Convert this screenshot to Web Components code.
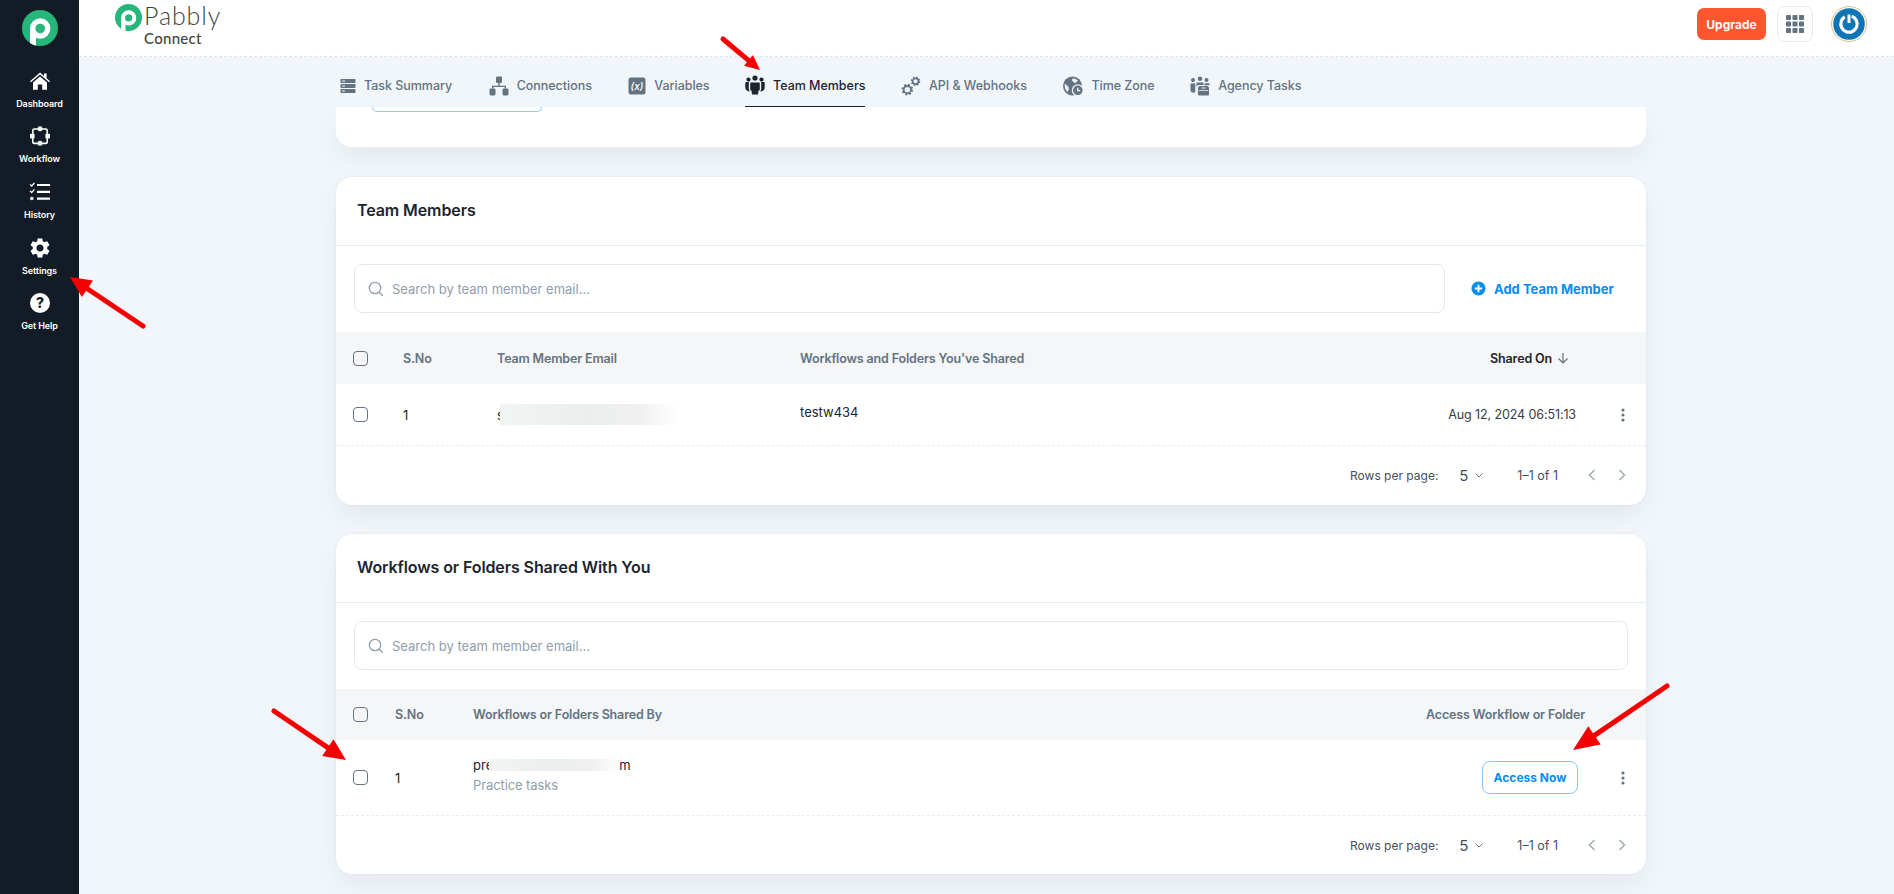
<!DOCTYPE html>
<html lang="en">
<head>
<meta charset="UTF-8">
<title>Pabbly Connect - Team Members</title>
<style>
  html, body { margin: 0; height: 894px; overflow: hidden; }
  body { position: relative; display: flex; background: #f1f6fb; font-family: Inter, "Liberation Sans", sans-serif; color: #1c252e; }
</style>
</head>
<body>

<side-bar>
  <nav-item label="Dashboard"><svg viewBox="0 0 22 20" width="22" height="20" fill="#fff"><path d="M1 10.200 11 1.600l4 3.400V2.600h2.600v4.600L21 10.200l-.9 1L11 3.500l-9.100 7.700z"/><path d="M4 11.400 11 5.400l7 6v7.400h-4.800V13.400H8.800v5.400H4z"/></svg></nav-item>
  <nav-item label="Workflow"><svg viewBox="0 0 20 20" width="20" height="20"><rect x="2.800" y="3" width="14.400" height="14.400" rx="1.500" fill="none" stroke="#fff" stroke-width="1.600"/><circle cx="10" cy="2.700" r="2.500" fill="#fff"/><circle cx="10" cy="17.300" r="2.500" fill="#fff"/><rect x="0" y="7.800" width="4.600" height="4.800" rx="1" fill="#fff"/><rect x="15.400" y="7.800" width="4.600" height="4.800" rx="1" fill="#fff"/></svg></nav-item>
  <nav-item label="History"><svg viewBox="0 0 22 20" width="22" height="20" fill="none" stroke="#fff"><path d="M1 2.400 2.700 4 5.400.8M1 8.900l1.700 1.600 2.700-3.200" stroke-width="1.300"/><circle cx="2.800" cy="16.500" r="1.800" fill="#fff" stroke="none"/><path d="M8 3h13M8 9.800h13M8 16.600h13" stroke-width="2.200"/></svg></nav-item>
  <nav-item label="Settings"><svg viewBox="0 0 24 24" width="24" height="24" fill="#fff"><path d="M19.140 12.940c.04-.3.06-.61.06-.94 0-.32-.02-.64-.07-.94l2.030-1.580a.49.49 0 0 0 .12-.61l-1.920-3.320a.488.488 0 0 0-.59-.22l-2.390.96c-.5-.38-1.030-.7-1.620-.94l-.36-2.540a.484.484 0 0 0-.48-.41h-3.840c-.24 0-.43.17-.47.41l-.36 2.540c-.59.24-1.130.57-1.620.94l-2.390-.96c-.22-.08-.47 0-.59.22L2.740 8.870c-.12.21-.08.47.12.61l2.030 1.580c-.05.3-.09.63-.09.94s.02.64.07.94l-2.030 1.580a.49.49 0 0 0-.12.61l1.920 3.320c.12.22.37.29.59.22l2.390-.96c.5.38 1.030.7 1.620.94l.36 2.540c.05.24.24.41.48.41h3.840c.24 0 .44-.17.47-.41l.36-2.540c.59-.24 1.130-.56 1.620-.94l2.390.96c.22.08.47 0 .59-.22l1.920-3.320c.12-.22.07-.47-.12-.61l-2.010-1.580zM12 15.600c-1.980 0-3.600-1.620-3.600-3.600s1.620-3.600 3.600-3.600 3.600 1.620 3.600 3.600-1.620 3.600-3.600 3.600z"/></svg></nav-item>
  <nav-item label="Get Help"><svg viewBox="0 0 20 20" width="20" height="20"><circle cx="10" cy="10" r="10" fill="#fff"/><text x="10" y="15" text-anchor="middle" font-family="Inter, sans-serif" font-size="14" font-weight="800" fill="#131c26">?</text></svg></nav-item>
</side-bar>

<main-column>
  <top-bar></top-bar>
  <page-body>
    <tab-strip>
      <tab-item label="Task Summary"><svg viewBox="0 0 16 16" width="16" height="16" fill="#637381"><rect x="0.500" y="1" width="15" height="4" rx=".8"/><rect x="0.500" y="6" width="15" height="4" rx=".8"/><rect x="0.500" y="11" width="15" height="4" rx=".8"/><path d="M2 2.500h3v1H2zM2 7.500h3v1H2zM2 12.500h3v1H2z" fill="#f1f6fb"/></svg></tab-item>
      <tab-item label="Connections"><svg viewBox="0 0 20 20" width="20" height="20" fill="#637381"><rect x="7" y="0.500" width="6" height="6.500" rx="1.200"/><rect x="0.500" y="12.500" width="6" height="7" rx="1.400"/><rect x="13.500" y="12.500" width="6" height="7" rx="1.400"/><path d="M9.300 7h1.400v2.800h6.300v2.700h-1.400v-1.400H4.400v1.400H3V9.800h6.300z"/></svg></tab-item>
      <tab-item label="Variables"><svg viewBox="0 0 18 18" width="18" height="18"><rect x="0.500" y="0.500" width="17" height="17" rx="2.500" fill="#637381"/><text x="9" y="12.600" text-anchor="middle" font-family="Inter, sans-serif" font-size="10" font-style="italic" fill="#fff">(x)</text></svg></tab-item>
      <tab-item label="Team Members" active style="margin-left:-1px"><svg viewBox="0 0 20 20" width="20" height="20" fill="#1c252e"><circle cx="10" cy="3" r="2.600"/><circle cx="3.500" cy="4.600" r="2.100"/><circle cx="16.500" cy="4.600" r="2.100"/><path d="M6.200 7.500h7.600c.6 0 1 .4 1 1v5.500c0 1-.5 1.500-1.300 1.800L13 19.500H7l-.5-3.700C5.700 15.500 5.200 15 5.200 14V8.500c0-.6.4-1 1-1z"/><path d="M.3 8c0-.6.4-1 1-1h2.500v7c0 .8.3 1.500.9 2L4.500 16.500C1.700 16 .3 14.500.3 12.500zM19.700 8c0-.6-.4-1-1-1h-2.500v7c0 .8-.3 1.500-.9 2l.2.5c2.800-.5 4.200-2 4.200-4z"/></svg></tab-item>
      <tab-item label="API &amp; Webhooks" style="margin-left:-1px"><svg viewBox="0 0 22 22" width="20" height="20" fill="none" stroke="#637381"><circle cx="7" cy="15" r="4" stroke-width="2"/><circle cx="7" cy="15" r="5.400" stroke-width="2" stroke-dasharray="2.100 2.140"/><circle cx="16" cy="5.800" r="3.200" stroke-width="1.800"/><circle cx="16" cy="5.800" r="4.300" stroke-width="1.800" stroke-dasharray="1.700 1.680"/></svg></tab-item>
      <tab-item label="Time Zone"><svg viewBox="0 0 20 20" width="20" height="20"><circle cx="9.500" cy="10" r="9.500" fill="#637381"/><path d="M10 2.200c2 .2 3.500 1 5 2.400l-2.500 2.300-1.800-.4L8.800 4.300zM1.700 7.500l3.600 3 .7 2.700-1.800 2.800C2.500 14.500 1.200 11 1.700 7.500z" fill="#f1f6fb" opacity=".95"/><circle cx="14.800" cy="14.300" r="5.400" fill="#637381" stroke="#f1f6fb" stroke-width="1.200"/><path d="M14.800 11.800v2.800h2.300" fill="none" stroke="#f1f6fb" stroke-width="1.300"/></svg></tab-item>
      <tab-item label="Agency Tasks" style="margin-left:-1px"><svg viewBox="0 0 20 20" width="20" height="20" fill="#637381"><circle cx="10" cy="2.700" r="2.300"/><circle cx="3" cy="4" r="2"/><circle cx="16.500" cy="4" r="2"/><path d="M0.500 7.500h4.800v9H2.500C1.200 16.500.5 15.500.5 14zM6.500 6.500h7v2.500H9C7.500 9 6.500 10 6.500 11.500zM14.500 7.200h5v2h-5z"/><path d="M8 11.500 9.500 10h8l1.500 1.500v6.800a1.200 1.200 0 0 1-1.200 1.200H9.200A1.200 1.200 0 0 1 8 18.300z"/><path d="M8.800 14.200h9.400v.9H8.800zM11.500 11.500h4v1h-4z" fill="#f1f6fb"/></svg></tab-item>
    </tab-strip>
    <stub-card></stub-card>

    <data-card title="Team Members" style="margin-top:30px;height:328px">
      <search-box slot="search" style="width:1091px"></search-box>
      <add-link slot="search">Add Team Member</add-link>
      <table-row slot="table" head columns="50px 94px 303px 1fr auto 70px" height="52">
        <check-mark></check-mark><span>S.No</span><span>Team Member Email</span><span>Workflows and Folders You've Shared</span>
        <sort-label>Shared On</sort-label><span></span>
      </table-row>
      <table-row slot="table" columns="50px 94px 303px 1fr auto 70px" height="61">
        <check-mark></check-mark><span>1</span>
        <span style="display:flex;align-items:center">s<redact-blur w="177" h="21" style="margin-left:-4px"></redact-blur></span>
        <span style="padding-bottom:6px">testw434</span>
        <span style="font-size:12.500px;letter-spacing:-.1px;color:#333d48">Aug 12, 2024 06:51:13</span>
        <kebab-menu offset="47"></kebab-menu>
      </table-row>
      <page-nav slot="table"></page-nav>
    </data-card>

    <data-card title="Workflows or Folders Shared With You" style="margin-top:29px;height:340px">
      <search-box slot="search" style="width:1274px"></search-box>
      <table-row slot="table" head columns="42px 78px 1fr auto 61px" height="51">
        <check-mark></check-mark><span>S.No</span><span>Workflows or Folders Shared By</span><span>Access Workflow or Folder</span><span></span>
      </table-row>
      <table-row slot="table" columns="42px 78px 1fr auto 61px" height="75">
        <check-mark></check-mark><span>1</span>
        <span style="padding-bottom:5px">
          <span style="display:flex;align-items:center;height:20px">pre<redact-blur w="130" h="12" style="margin-left:-4px"></redact-blur>m</span>
          <span style="display:block;color:#919eab;line-height:20px;letter-spacing:-.1px">Practice tasks</span>
        </span>
        <access-button>Access Now</access-button>
        <kebab-menu offset="38"></kebab-menu>
      </table-row>
      <page-nav slot="table"></page-nav>
    </data-card>
  </page-body>
</main-column>

<red-arrow x1="143" y1="326" x2="70" y2="277" head="21" half="10" width="5"></red-arrow>
<red-arrow x1="723" y1="39" x2="760" y2="70" head="15" half="7" width="5"></red-arrow>
<red-arrow x1="274" y1="711" x2="346" y2="760" head="22" half="10" width="5"></red-arrow>
<red-arrow x1="1667" y1="686" x2="1573" y2="750" head="26" half="11" width="5"></red-arrow>

<script>
  // small helper, every element gets an open shadow root from a html string
  function define(name, html, extra) {
    customElements.define(name, class extends HTMLElement {
      constructor() {
        super();
        this.attachShadow({ mode: "open" }).innerHTML = html;
      }
      connectedCallback() {
        if (extra) extra(this, this.shadowRoot);
      }
    });
  }

  define("side-bar", `
    <style>
      :host { display: flex; flex-direction: column; align-items: center; width: 79px; flex: none; height: 894px; background: #131c26; }
      svg { display: block; margin: 10px 0 9px; }
      .items { display: flex; flex-direction: column; }
    </style>
    <svg width="36" height="36" viewBox="0 0 36 36">
      <defs><clipPath id="c"><circle cx="18" cy="18" r="18"/></clipPath></defs>
      <circle cx="18" cy="18" r="18" fill="#26b67a"/>
      <g clip-path="url(#c)">
        <path d="M8 18.500a10.200 10.200 0 1 1 10.200 10.200c-1.500 0-3-.3-4.200-.9V37H8z" fill="#fff"/>
        <circle cx="18.200" cy="18.500" r="4.800" fill="#26b67a"/>
      </g>
    </svg>
    <div class="items"><slot></slot></div>`);

  define("nav-item", `
    <style>
      :host { display: flex; flex-direction: column; align-items: center; justify-content: flex-end; height: 55.700px; width: 79px; color: #fff; font-size: 9px; font-weight: 600; letter-spacing: -.1px; }
      .ic { height: 24px; display: flex; align-items: center; justify-content: center; margin-bottom: 4px; }
      .lb { line-height: 14px; height: 14px; }
    </style>
    <div class="ic"><slot></slot></div><div class="lb"></div>`,
    (el, root) => { root.querySelector(".lb").textContent = el.getAttribute("label"); });

  define("main-column", `
    <style>:host { display: flex; flex-direction: column; flex: 1; min-width: 0; }</style><slot></slot>`);

  define("top-bar", `
    <style>
      :host { display: flex; align-items: flex-start; height: 56px; flex: none; background: #fff; border-bottom: 1px dashed #dfe3e8; padding: 0 27px 0 36px; }
      .logo { display: flex; align-items: flex-start; height: 56px; }
      .brand { display: flex; flex-direction: column; margin-left: 2px; font-family: Lato, sans-serif; color: #444; }
      .brand b { font-weight: 300; font-size: 25px; line-height: 26px; height: 26px; letter-spacing: .9px; margin-top: 2px; }
      .brand i { font-style: normal; font-weight: 500; font-size: 15px; line-height: 16px; letter-spacing: .3px; margin-top: 2px; }
      .logo svg { margin-top: 4px; }
      .right { margin-left: auto; display: flex; align-items: center; height: 48px; }
      .up { width: 69px; height: 32px; border-radius: 7px; background: #ff5630; color: #fff; font-size: 12px; font-weight: 700; display: flex; align-items: center; justify-content: center; }
      .grid { width: 34px; height: 34px; margin-left: 11px; border: 1px solid #e8ebee; border-radius: 8px; display: flex; align-items: center; justify-content: center; }
      .av { margin-left: 18px; display: block; }
    </style>
    <div class="logo">
      <svg width="27" height="27" viewBox="0 0 36 36">
        <defs><clipPath id="c2"><circle cx="18" cy="18" r="18"/></clipPath></defs>
        <circle cx="18" cy="18" r="18" fill="#26b67a"/>
        <g clip-path="url(#c2)">
          <path d="M8 18.500a10.200 10.200 0 1 1 10.200 10.200c-1.500 0-3-.3-4.200-.9V37H8z" fill="#fff"/>
          <circle cx="18.200" cy="18.500" r="4.800" fill="#26b67a"/>
        </g>
      </svg>
      <div class="brand"><b>Pabbly</b><i>Connect</i></div>
    </div>
    <div class="right">
      <div class="up">Upgrade</div>
      <div class="grid">
        <svg width="18" height="18" viewBox="0 0 18 18" fill="#637381">
          <rect x="0" y="0" width="5" height="5" rx=".8"/><rect x="6.500" y="0" width="5" height="5" rx=".8"/><rect x="13" y="0" width="5" height="5" rx=".8"/>
          <rect x="0" y="6.500" width="5" height="5" rx=".8"/><rect x="6.500" y="6.500" width="5" height="5" rx=".8"/><rect x="13" y="6.500" width="5" height="5" rx=".8"/>
          <rect x="0" y="13" width="5" height="5" rx=".8"/><rect x="6.500" y="13" width="5" height="5" rx=".8"/><rect x="13" y="13" width="5" height="5" rx=".8"/>
        </svg>
      </div>
      <svg class="av" width="36" height="36" viewBox="0 0 36 36">
        <circle cx="18" cy="18" r="17.500" fill="#fff" stroke="#c9b26a" stroke-width=".8"/>
        <circle cx="18" cy="18" r="15.800" fill="#0f75b5"/>
        <circle cx="18" cy="18" r="8.200" fill="none" stroke="#fff" stroke-width="3.200" stroke-dasharray="44 8" transform="rotate(-70 18 18)"/>
        <path d="M18 8.500v8.500" stroke="#fff" stroke-width="3"/>
      </svg>
    </div>`);

  define("page-body", `
    <style>:host { display: flex; flex-direction: column; padding-left: 257px; width: 1310px; }</style><slot></slot>`);

  define("tab-strip", `
    <style>:host { display: flex; height: 50px; flex: none; padding-left: 4px; background: #f1f6fb; gap: 36.500px; }</style><slot></slot>`);

  define("tab-item", `
    <style>
      :host { display: flex; align-items: center; gap: 8px; height: 50px; padding-top: 7px; box-sizing: border-box; color: #637381; font-size: 12.500px; font-weight: 500; letter-spacing: -.03px; white-space: nowrap; }
      :host([active]) { color: #1c252e; border-bottom: 1px solid #1c252e; }
    </style>
    <slot></slot><span class="t"></span>`,
    (el, root) => { root.querySelector(".t").textContent = el.getAttribute("label"); });

  define("stub-card", `
    <style>
      :host { display: block; height: 40px; flex: none; background: #fff; border-radius: 0 0 16px 16px; box-shadow: 0 12px 24px -4px rgba(145,158,171,.16); }
      div { margin-left: 36px; width: 170px; height: 5px; box-sizing: border-box; border: 1px solid #8fc9f5; border-top: 0; border-radius: 0 0 7px 7px; }
    </style><div></div>`);

  define("data-card", `
    <style>
      :host { display: block; flex: none; box-sizing: border-box; background: #fff; border-radius: 16px; overflow: hidden; box-shadow: 0 12px 24px -4px rgba(145,158,171,.16), 0 0 2px rgba(145,158,171,.2); }
      .head { height: 69px; display: flex; align-items: center; padding: 0 0 2px 21px; box-sizing: border-box; font-size: 16px; font-weight: 600; letter-spacing: -.1px; color: #1c252e; border-bottom: 1px solid #e9ecef; }
      .search { display: flex; align-items: center; padding: 18px 18px 19px; height: 49px; }
    </style>
    <div class="head"></div>
    <div class="search"><slot name="search"></slot></div>
    <slot name="table"></slot>`,
    (el, root) => { root.querySelector(".head").textContent = el.getAttribute("title"); el.removeAttribute("title"); });

  define("search-box", `
    <style>
      :host { display: flex; align-items: center; height: 49px; flex: none; box-sizing: border-box; border: 1px solid #e4e8ec; border-radius: 8px; padding-left: 13px; gap: 8px; color: #919eab; font-size: 13px; }
      svg { display: block; }
    </style>
    <svg width="16" height="16" viewBox="0 0 16 16" fill="none" stroke="#919eab" stroke-width="1.300"><circle cx="7" cy="7" r="5.700"/><path d="m11.200 11.200 3.600 3.600"/></svg>
    <span>Search by team member email...</span>`);

  define("add-link", `
    <style>
      :host { display: flex; align-items: center; gap: 8px; margin-left: 26px; color: #078dee; font-size: 13px; font-weight: 700; white-space: nowrap; }
      svg { display: block; }
    </style>
    <svg width="15" height="15" viewBox="0 0 15 15"><circle cx="7.500" cy="7.500" r="7" fill="#078dee"/><path d="M7.500 3.800v7.400M3.800 7.500h7.400" stroke="#fff" stroke-width="1.800"/></svg>
    <slot></slot>`);

  define("table-row", `
    <style>
      :host { display: grid; align-items: center; padding-left: 17px; box-sizing: border-box; font-size: 13px; color: #1c252e; }
      :host([head]) { background: #f4f6f8; color: #637381; font-weight: 600; font-size: 12.500px; letter-spacing: -.15px; }
      :host(:not([head])) { border-bottom: 1px dashed #e9ecef; }
    </style>
    <slot></slot>`,
    (el) => {
      el.style.gridTemplateColumns = el.getAttribute("columns");
      const h = +el.getAttribute("height");
      el.style.height = (el.hasAttribute("head") ? h : h + 1) + "px";
    });

  define("check-mark", `
    <style>:host { display: block; width: 15px; height: 15px; box-sizing: border-box; border: 1.500px solid #637381; border-radius: 4px; }</style>`);

  define("redact-blur", `
    <style>
      :host { display: inline-block; flex: none; background: linear-gradient(90deg, #f2f3f3, #eceeee 50%, #f0f0f0 80%, #fff); }
    </style>`,
    (el) => {
      el.style.width = el.getAttribute("w") + "px";
      el.style.height = el.getAttribute("h") + "px";
    });

  define("sort-label", `
    <style>
      :host { display: flex; align-items: center; gap: 5px; justify-self: end; padding-right: 7px; color: #1c252e; font-weight: 600; }
      svg { display: block; }
    </style>
    <slot></slot>
    <svg width="12" height="12" viewBox="0 0 12 12" fill="none" stroke="#637381" stroke-width="1.200"><path d="M6 1v10M1.500 6.500 6 11l4.500-4.500"/></svg>`);

  define("kebab-menu", `
    <style>
      :host { display: block; }
      svg { display: block; }
    </style>
    <svg width="4" height="14" viewBox="0 0 4 14" fill="#637381"><circle cx="2" cy="2" r="1.600"/><circle cx="2" cy="7" r="1.600"/><circle cx="2" cy="12" r="1.600"/></svg>`,
    (el) => { el.style.paddingLeft = (+el.getAttribute("offset") - 2) + "px"; });

  define("access-button", `
    <style>
      :host { display: flex; align-items: center; justify-content: center; justify-self: end; width: 96px; height: 33px; margin-right: 7px; box-sizing: border-box; border: 1px solid #83c6f6; border-radius: 8px; color: #078dee; font-size: 12px; font-weight: 700; }
    </style><slot></slot>`);

  define("page-nav", `
    <style>
      :host { display: flex; align-items: center; justify-content: flex-end; height: 58px; padding-right: 14px; font-size: 12px; color: #454f5b; }
      .five { margin-left: 21px; font-size: 15px; width: 16px; }
      .count { margin-left: 34px; font-size: 12.500px; }
      svg { display: block; }
      .prev { margin-left: 24px; }
      .next { margin-left: 10px; }
    </style>
    <span>Rows per page:</span>
    <span class="five">5</span>
    <svg width="8" height="5" viewBox="0 0 8 5" fill="none" stroke="#637381" stroke-width="1"><path d="m.5.5 3.500 3.500L7.500.5"/></svg>
    <span class="count">1–1 of 1</span>
    <svg class="prev" width="20" height="20" viewBox="0 0 20 20" fill="none" stroke="#a0abb7" stroke-width="1.500"><path d="M12.500 5 7.500 10l5 5"/></svg>
    <svg class="next" width="20" height="20" viewBox="0 0 20 20" fill="none" stroke="#a0abb7" stroke-width="1.500"><path d="M7.500 5l5 5-5 5"/></svg>`);

  // annotation arrows drawn on top of the screenshot
  define("red-arrow", `
    <style>:host { position: absolute; left: 0; top: 0; width: 1894px; height: 894px; pointer-events: none; }
      svg { display: block; }</style>
    <svg width="1894" height="894"><line stroke="#f50000" stroke-linecap="round"/><polygon fill="#f50000"/></svg>`,
    (el, root) => {
      const [x1, y1, x2, y2, head, half, w] = ["x1", "y1", "x2", "y2", "head", "half", "width"].map(a => +el.getAttribute(a));
      const len = Math.hypot(x2 - x1, y2 - y1), ux = (x2 - x1) / len, uy = (y2 - y1) / len;
      const bx = x2 - ux * head, by = y2 - uy * head;
      const line = root.querySelector("line");
      line.setAttribute("x1", x1); line.setAttribute("y1", y1);
      line.setAttribute("x2", bx); line.setAttribute("y2", by);
      line.setAttribute("stroke-width", w);
      root.querySelector("polygon").setAttribute("points",
        `${x2},${y2} ${bx - uy * half},${by + ux * half} ${bx + uy * half},${by - ux * half}`);
    });
</script>
</body>
</html>
